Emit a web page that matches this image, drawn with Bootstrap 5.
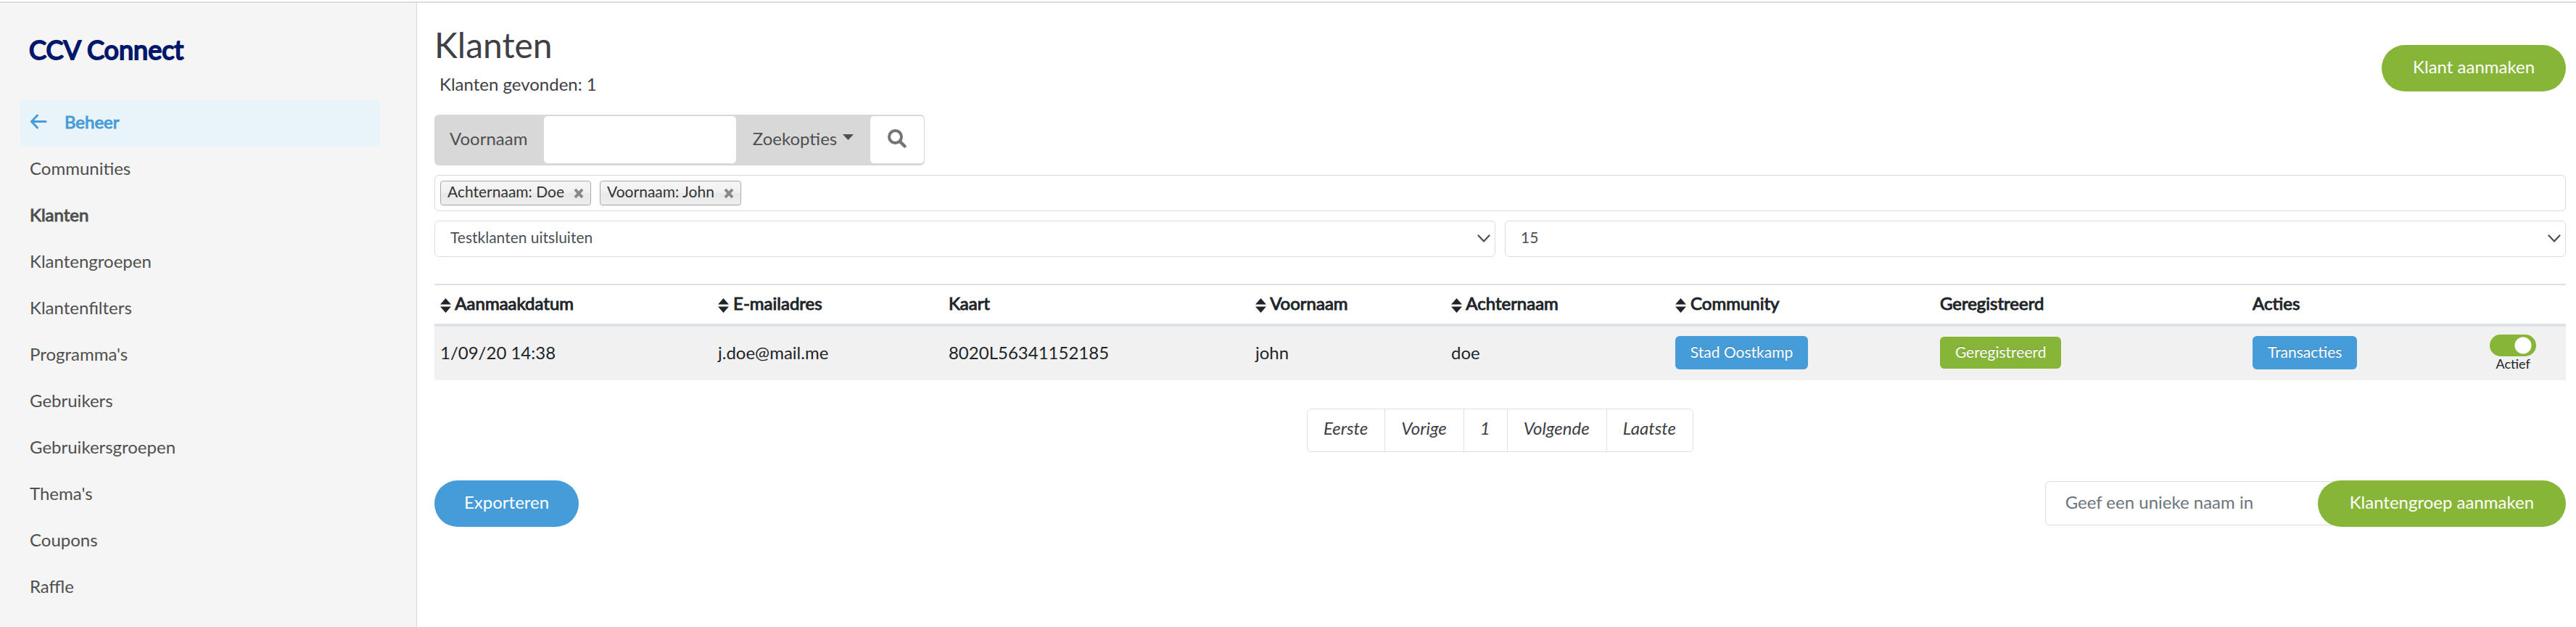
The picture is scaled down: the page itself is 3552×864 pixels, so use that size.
<!DOCTYPE html>
<html lang="nl">
<head>
<meta charset="utf-8">
<meta name="viewport" content="width=device-width, initial-scale=1">
<title>Klanten - CCV Connect</title>
<link href="https://cdn.jsdelivr.net/npm/bootstrap@5.3.0/dist/css/bootstrap.min.css" rel="stylesheet">
<style>
  :root { --ccv-blue: #459cd9; --ccv-green: #87b538; --ccv-line: #dddddd; }
  body { font-family: Lato, "Noto Sans", sans-serif; font-size: 24px; line-height: 36px; color: #3f4045; padding-top: 2px; }
  .app-shell { border-top: 2px solid var(--ccv-line); min-height: calc(100vh - 2px); }
  .faux-bold { font-weight: 400; -webkit-text-stroke: 1px currentColor; }

  .side-menu { flex: 0 0 575px; background: #f5f5f5; border-right: 1px solid #d9d9d9; padding: 44px 50px 16px 28px; }
  .brand { font-size: 36px; line-height: 40px; color: #00176b; text-decoration: none; padding: 0 12px; margin-bottom: 50px; -webkit-text-stroke-width: 2px; }
  .side-menu .nav-link { color: #4f4f4f; padding: 12px 13px 16px; border-radius: 6px; line-height: 36px; }
  .side-menu .nav-back { background: #e8f3fa; color: var(--ccv-blue); gap: 23px; }

  .page-main { min-width: 0; padding: 28px 14px 16px 24px; }
  .page-title { font-size: 48px; line-height: 60px; margin: 0 0 6px; color: #3f4045; }
  .found-count { margin: 0 0 24px 7px; }
  .btn-pill { font-size: 24px; line-height: 36px; padding: 12px 41px 16px; border: 0; border-radius: 32px; color: #fff; }
  .btn-pill:hover { color: #fff; }
  .btn-pill.bg-ccv-green { padding-left: 43px; padding-right: 43px; }
  .bg-ccv-blue, .bg-ccv-blue:hover { background: var(--ccv-blue); }
  .bg-ccv-green, .bg-ccv-green:hover { background: var(--ccv-green); }
  .head-action { margin-top: 30px; }

  .search-bar { width: 676px; height: 70px; background: #d8d8d8; border-radius: 6px; padding: 2px 1px 3px 0; margin-bottom: 13px; color: #4f4f4f; }
  .search-bar label { width: 151px; padding: 0 0 4px 21px; }
  .search-bar input { width: 265px; border: 0; border-radius: 5px; font-size: 24px; }
  .search-bar .options-btn { flex: 1; border: 0; background: none; color: inherit; padding: 0 0 4px; font-size: 24px; line-height: 36px; }
  .search-bar .options-btn svg { margin: 0 0 4px 8px; }
  .search-bar .find-btn { width: 74px; border: 0; border-radius: 5px; background: #fff; padding: 0 0 8px; }

  .chip-box { border: 1px solid #d9d9d9; border-radius: 6px; min-height: 49px; padding: 7px; gap: 12px; margin-bottom: 13px; }
  .chip { height: 34px; border: 1px solid #aaa; border-radius: 4px; padding: 0 9px; gap: 13px; color: #333; font-size: 21px; line-height: 28px;
          background: linear-gradient(#f4f4f4 20%, #f0f0f0 50%, #e8e8e8 52%, #eee); box-shadow: 0 1px 1px rgba(0,0,0,.06); }
  .chip button { border: 0; background: none; padding: 5px 0 0; display: flex; }

  .filter-row { gap: 13px; margin-bottom: 37px; }
  .filter-row .form-select { flex: 1; height: 50px; border: 1px solid #ddd; border-radius: 6px; font-size: 21px; line-height: 28px; color: #495057; padding: 8px 40px 12px 21px;
    background: #fff url("data:image/svg+xml,%3Csvg xmlns='http://www.w3.org/2000/svg' viewBox='0 0 18 12'%3E%3Cpath d='M1.5 1.5 9 9.5l7.500-8' fill='none' stroke='%23495057' stroke-width='2.200' stroke-linecap='round' stroke-linejoin='round'/%3E%3C/svg%3E") no-repeat right 6px center / 18px 12px; }

  .client-table { table-layout: fixed; margin-bottom: 39px; color: #212529; }
  .client-table > :not(caption) > * > * { padding: 0 8px; border: 0; box-shadow: none; background: none; vertical-align: middle; white-space: nowrap; }
  .client-table thead tr { height: 56px; border-top: 2px solid #dee2e6; border-bottom: 4px solid #dee2e6; }
  .client-table > thead > tr > th { padding-bottom: 4px; }
  .client-table tbody tr { height: 76px; background: #f1f1f1; }
  .client-table > tbody > tr > td { padding-bottom: 2px; }
  .w-created { width: 13.03%; } .w-mail { width: 10.82%; } .w-card { width: 14.39%; } .w-first { width: 9.19%; }
  .w-last { width: 10.51%; } .w-community { width: 12.42%; } .w-reg { width: 14.67%; } .w-actions { width: 11.13%; }
  .sort-icon { vertical-align: -4px; }
  .btn-tag { display: inline-block; vertical-align: middle; font-size: 21px; line-height: 30px; padding: 7px 21px 9px; border: 0; border-radius: 6px; color: #fff; text-shadow: 0 -1px 0 rgba(0,0,0,.25); }
  .btn-tag:hover { color: #fff; }
  .badge-tag { padding: 6px 21px 8px; }
  .switch-box { width: 64px; text-align: center; }
  .switch-box .form-check-input { display: block; float: none; width: 64px; height: 30px; margin: 0; border: 0; background-color: var(--ccv-green);
    background-image: radial-gradient(circle at 46px 15px, #fff 11px, transparent 12px); background-size: auto; background-position: 0 0; }
  .switch-box label { display: block; font-size: 18px; line-height: 20px; }

  .pagination { margin-bottom: 39px; font-style: italic; }
  .pagination .page-link { font-size: 24px; line-height: 36px; padding: 8px 23px 14px 22px; color: #3f4045; border-color: #dee2e6; }
  .pagination .page-item:first-child .page-link { border-radius: 6px 0 0 6px; }
  .pagination .page-item:last-child .page-link { border-radius: 0 6px 6px 0; }

  .group-form input { width: 410px; height: 61px; border: 1px solid #ddd; border-radius: 6px; font-size: 24px; padding: 6px 27px 10px; margin: 1px -34px 0 0; }
  .group-form input::placeholder { color: #6c757d; opacity: 1; }
  .group-form .btn-pill.bg-ccv-green { z-index: 1; padding-left: 44px; padding-right: 44px; }
</style>
</head>
<body>
<div class="app-shell d-flex">
  <aside class="side-menu d-flex flex-column">
    <a class="brand faux-bold" href="#">CCV Connect</a>
    <nav class="nav flex-column" aria-label="Beheer">
      <a class="nav-link nav-back faux-bold d-flex align-items-center" href="#">
        <svg width="25" height="22" viewBox="0 0 25 22" fill="none" stroke="currentColor" stroke-width="3" stroke-linecap="round" stroke-linejoin="round" aria-hidden="true"><path d="M22 10.500H2.500M10.500 2 2.500 10.500l8 8.500"/></svg>
        <span>Beheer</span>
      </a>
      <a class="nav-link" href="#">Communities</a>
      <a class="nav-link faux-bold" href="#" aria-current="page">Klanten</a>
      <a class="nav-link" href="#">Klantengroepen</a>
      <a class="nav-link" href="#">Klantenfilters</a>
      <a class="nav-link" href="#">Programma's</a>
      <a class="nav-link" href="#">Gebruikers</a>
      <a class="nav-link" href="#">Gebruikersgroepen</a>
      <a class="nav-link" href="#">Thema's</a>
      <a class="nav-link" href="#">Coupons</a>
      <a class="nav-link" href="#">Raffle</a>
    </nav>
  </aside>

  <main class="page-main flex-grow-1">
    <header class="d-flex justify-content-between align-items-start">
      <div>
        <h1 class="page-title fw-normal">Klanten</h1>
        <p class="found-count">Klanten gevonden: 1</p>
      </div>
      <button type="button" class="btn btn-pill bg-ccv-green head-action">Klant aanmaken</button>
    </header>

    <form class="search-bar d-flex align-items-stretch">
      <label class="d-flex align-items-center" for="firstname">Voornaam</label>
      <input type="text" id="firstname">
      <button type="button" class="options-btn d-flex align-items-center justify-content-center">Zoekopties<svg width="15" height="8" viewBox="0 0 15 8" aria-hidden="true"><path d="M0 0h15L7.500 8z" fill="currentColor"/></svg></button>
      <button type="submit" class="find-btn" aria-label="Zoeken">
        <svg width="26" height="26" viewBox="0 0 26 26" fill="none" stroke="#757575" aria-hidden="true"><circle cx="10.500" cy="10.500" r="8.500" stroke-width="4"/><path d="M17 17l6.500 6.500" stroke-width="4.500" stroke-linecap="round"/></svg>
      </button>
    </form>

    <div class="chip-box d-flex align-items-center">
      <span class="chip d-flex">Achternaam: Doe
        <button type="button" aria-label="Verwijder Achternaam"><svg width="14" height="23" viewBox="0 0 14 23" stroke="#888" stroke-width="4" aria-hidden="true"><path d="M2 6l10 11M12 6L2 17"/></svg></button></span>
      <span class="chip d-flex">Voornaam: John
        <button type="button" aria-label="Verwijder Voornaam"><svg width="14" height="23" viewBox="0 0 14 23" stroke="#888" stroke-width="4" aria-hidden="true"><path d="M2 6l10 11M12 6L2 17"/></svg></button></span>
    </div>

    <div class="filter-row d-flex">
      <select class="form-select" aria-label="Testklanten"><option>Testklanten uitsluiten</option></select>
      <select class="form-select" aria-label="Aantal per pagina"><option>15</option></select>
    </div>

    <svg class="d-none" aria-hidden="true"><symbol id="sort" viewBox="0 0 15 20"><path d="M7.500 0 15 8.500H0zM0 11.500h15l-7.500 8.500z" fill="currentColor"/></symbol></svg>
    <table class="table client-table">
      <thead>
        <tr>
          <th class="faux-bold w-created"><svg class="sort-icon" width="15" height="20"><use href="#sort"/></svg> Aanmaakdatum</th>
          <th class="faux-bold w-mail"><svg class="sort-icon" width="15" height="20"><use href="#sort"/></svg> E-mailadres</th>
          <th class="faux-bold w-card">Kaart</th>
          <th class="faux-bold w-first"><svg class="sort-icon" width="15" height="20"><use href="#sort"/></svg> Voornaam</th>
          <th class="faux-bold w-last"><svg class="sort-icon" width="15" height="20"><use href="#sort"/></svg> Achternaam</th>
          <th class="faux-bold w-community"><svg class="sort-icon" width="15" height="20"><use href="#sort"/></svg> Community</th>
          <th class="faux-bold w-reg">Geregistreerd</th>
          <th class="faux-bold w-actions">Acties</th>
          <th></th>
        </tr>
      </thead>
      <tbody>
        <tr>
          <td>1/09/20 14:38</td>
          <td>j.doe@mail.me</td>
          <td>8020L56341152185</td>
          <td>john</td>
          <td>doe</td>
          <td><a class="btn btn-tag bg-ccv-blue" href="#">Stad Oostkamp</a></td>
          <td><span class="btn-tag badge-tag bg-ccv-green">Geregistreerd</span></td>
          <td><a class="btn btn-tag bg-ccv-blue" href="#">Transacties</a></td>
          <td><div class="switch-box form-switch p-0"><input class="form-check-input" type="checkbox" role="switch" id="active" checked><label for="active">Actief</label></div></td>
        </tr>
      </tbody>
    </table>

    <nav aria-label="Paginering">
      <ul class="pagination justify-content-center">
        <li class="page-item"><a class="page-link" href="#">Eerste</a></li>
        <li class="page-item"><a class="page-link" href="#">Vorige</a></li>
        <li class="page-item"><a class="page-link" href="#">1</a></li>
        <li class="page-item"><a class="page-link" href="#">Volgende</a></li>
        <li class="page-item"><a class="page-link" href="#">Laatste</a></li>
      </ul>
    </nav>

    <div class="d-flex justify-content-between align-items-start">
      <button type="button" class="btn btn-pill bg-ccv-blue">Exporteren</button>
      <form class="group-form d-flex align-items-start">
        <input type="text" placeholder="Geef een unieke naam in" aria-label="Naam van de klantengroep">
        <button type="submit" class="btn btn-pill bg-ccv-green">Klantengroep aanmaken</button>
      </form>
    </div>
  </main>
</div>
<script src="https://cdn.jsdelivr.net/npm/bootstrap@5.3.0/dist/js/bootstrap.bundle.min.js"></script>
</body>
</html>
